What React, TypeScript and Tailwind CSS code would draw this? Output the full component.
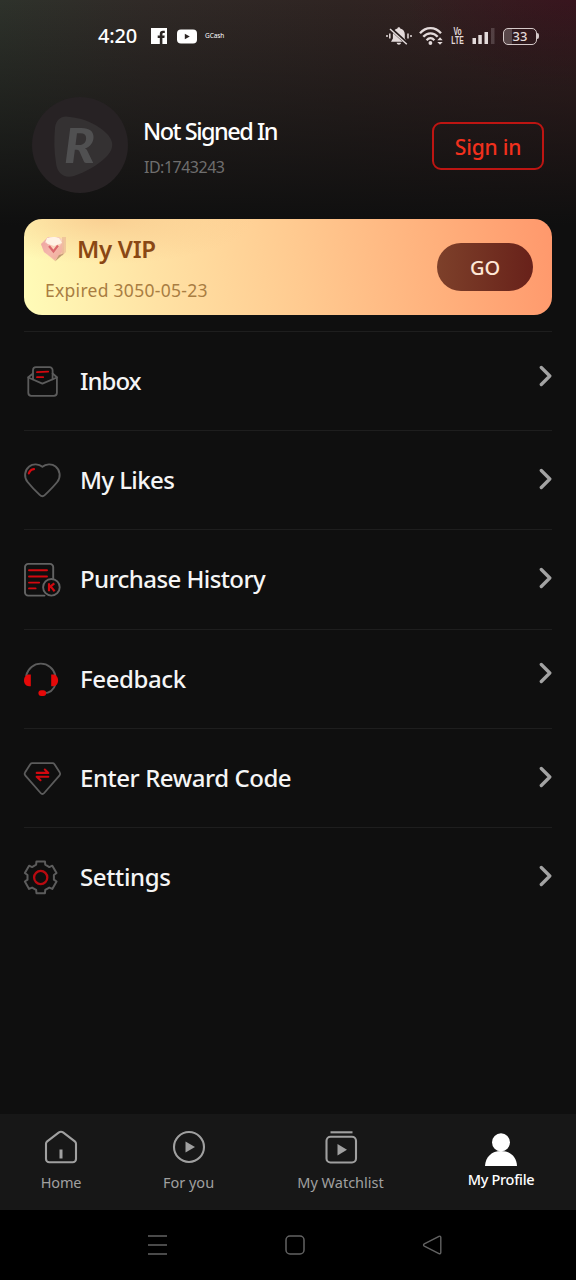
import React from 'react';

type IconProps = { className?: string };

const svgProps = {
  viewBox: '0 0 40 40',
  fill: 'none',
  strokeLinecap: 'round' as const,
  strokeLinejoin: 'round' as const,
  className: 'size-10 shrink-0',
};

const GREY = '#5c5c5c';
const RED = '#d3080f';

const InboxIcon = () => (
  <svg {...svgProps} stroke={GREY} strokeWidth={1.8}>
    <path d="M11 12.5 6.3 16.2v15.6a3 3 0 0 0 3 3h22.6a3 3 0 0 0 3-3V16.2L30.6 12.5" />
    <path d="M6.3 16.5 20.4 22.6 34.9 16.5" />
    <path d="M11 18.3V9.2a3 3 0 0 1 3-3h13.6a3 3 0 0 1 3 3v9.1" />
    <path d="M15 11.2 26.2 10.6M15 16.2h6.2" stroke={RED} strokeWidth={1.8} />
  </svg>
);

const HeartIcon = () => (
  <svg {...svgProps} stroke={GREY} strokeWidth={1.9}>
    <path d="M20.4 6.8C17 3.8 11 3.4 7.2 6.4c-4.8 3.9-5.5 10.6-1.6 15.6 3.6 4.5 7.8 8.8 12.1 12.9 1.700 1.600 3.600 1.600 5.300 0 4.300-4.100 8.600-8.400 12.200-12.900 3.900-5 3.100-11.700-1.600-15.600C29.800 3.400 23.800 3.800 20.400 6.800Z" />
    <path d="M6.800 13.400c.8-2.300 2.600-4 5.200-4.300" stroke={RED} strokeWidth={2.2} />
  </svg>
);

const PurchaseIcon = () => (
  <svg {...svgProps} stroke="#636363" strokeWidth={1.9}>
    <path d="M31.200 19.500V8.100a3.200 3.200 0 0 0-3.200-3.200H6.200A3.200 3.200 0 0 0 3 8.100v25.300a3.200 3.200 0 0 0 3.200 3.200h16.300" />
    <circle cx="29.400" cy="28.300" r="8.300" />
    <path d="M7 11.200h18M7 17.500h18M7 23.600h10.200M7 29.400h6.600" stroke={RED} />
    <path d="M27 24.300v8M32.300 24.300l-4.900 4.100M28.600 27.400l4 4.900" stroke={RED} strokeWidth={2.2} strokeLinecap="butt" />
  </svg>
);

const FeedbackIcon = () => (
  <svg {...svgProps} stroke={GREY} strokeWidth={1.8}>
    <path d="M4.200 16.500C6 9.400 11.800 4.700 18.800 4.700s12.900 4.700 14.600 11.800M33.600 25c-1.600 5.600-5 9-12.100 9.400" />
    <g fill="#e60909" stroke="none">
      <path d="M8.800 15.600v11.600H7c-3 0-5-2.300-5-5.700s2-5.900 5-5.900Z" />
      <path d="M29.200 15.600v11.600h2.300c2.400 0 4.600-2.300 4.600-5.700s-2.200-5.900-4.600-5.900Z" />
      <rect x="16.400" y="31.200" width="7.800" height="5.800" rx="2.900" />
    </g>
  </svg>
);

const RewardIcon = () => (
  <svg {...svgProps} stroke={GREY} strokeWidth={1.8}>
    <path d="M10.300 5.200h20.200c.9 0 1.500.3 2 1l5.300 8.400c.6.900.5 1.900-.2 2.700L22.200 35c-1.100 1.300-2.500 1.300-3.600 0L3.200 17.300c-.7-.8-.8-1.800-.2-2.700l5.300-8.400c.5-.7 1.100-1 2-1Z" />
    <path d="M14.700 14.900H26.300L22.800 11.500M26.300 18.700H14.700l3.800 3.500" stroke={RED} strokeWidth={2.1} />
  </svg>
);

// Six-toothed gear outline around (18.7, 20.3)
const gearPath = () => {
  const points: string[] = [];
  for (let i = 0; i < 6; i++) {
    [
      [-20, 13.4],
      [-15, 16.4],
      [15, 16.4],
      [20, 13.4],
    ].forEach(([offset, r]) => {
      const a = ((i * 60 - 90 + offset) * Math.PI) / 180;
      points.push(`${(18.7 + r * Math.cos(a)).toFixed(2)} ${(20.3 + r * Math.sin(a)).toFixed(2)}`);
    });
  }
  return `M${points.join('L')}Z`;
};

const SettingsIcon = () => (
  <svg {...svgProps} stroke={GREY} strokeWidth={2}>
    <path d={gearPath()} />
    <circle cx="18.700" cy="20.500" r="6.600" stroke="#b80a10" strokeWidth={2.3} />
  </svg>
);

const Chevron: React.FC<IconProps> = ({ className }) => (
  <svg viewBox="0 0 14 22" className={`h-[22px] w-3.5 ${className ?? ''}`} fill="none" stroke="#a3a3a3" strokeWidth={3.3} strokeLinecap="round" strokeLinejoin="round">
    <path d="M3.300 2.500 11.800 11 3.300 19.500" />
  </svg>
);

const menu = [
  { label: 'Inbox', icon: InboxIcon, chevron: 'mb-[11px]', text: 'tracking-[-1px]' },
  { label: 'My Likes', icon: HeartIcon, chevron: 'mb-[3px]', text: 'tracking-[-0.6px]' },
  { label: 'Purchase History', icon: PurchaseIcon, chevron: 'mb-[3px]', text: 'tracking-[-0.58px]' },
  { label: 'Feedback', icon: FeedbackIcon, chevron: 'mb-[12px]', text: 'tracking-[-0.4px]' },
  { label: 'Enter Reward Code', icon: RewardIcon, chevron: 'mb-[2px]', text: 'tracking-[-0.44px]' },
  { label: 'Settings', icon: SettingsIcon, chevron: 'mb-[2px]', text: 'tracking-[-0.35px]' },
];

const StatusBar = () => (
  <div className="flex h-18 items-center pr-[37px] pl-[98px] text-white">
    <span className="w-[53px] text-[20px] leading-none font-medium tracking-[-0.2px]">4:20</span>
    <svg viewBox="0 0 16 16" className="size-4">
      <path fill="#fff" d="M0 0h16v16h-4.600V9.900h2l.3-2.300h-2.300V6.200c0-.8.300-1.200 1.200-1.200h1.200V2.800h-1.900C9.900 2.800 8.800 4 8.800 5.900v1.700H6.700v2.300h2.100V16H0Z" />
    </svg>
    <svg viewBox="0 0 20 15" className="ml-2.5 h-[15px] w-5">
      <rect y="0.500" width="20" height="14" rx="4" fill="#fff" />
      <path d="M7.800 4.800v5.400l5-2.700Z" fill="#2a2321" />
    </svg>
    <span className="ml-2 text-[6.5px] leading-none tracking-[-0.1px]">GCash</span>

    <div className="ml-auto flex items-center text-[#e3dada]">
      <svg viewBox="0 0 26 20" className="h-5 w-[26px]" fill="currentColor">
        <path d="M12.800 1.200c.8 0 1.300.5 1.400 1.200 2.900.6 4.600 2.900 4.600 5.800v4.300l1.900 3.200H5l1.900-3.200V8.200c0-2.900 1.700-5.200 4.500-5.800.1-.7.600-1.200 1.400-1.200ZM10.600 16.800h4.500c-.3 1.200-1.100 1.900-2.200 1.900s-2-.7-2.300-1.900Z" />
        <path d="M4.800 2.800 21.500 18" stroke="#241b1a" strokeWidth="3.400" />
        <path d="M4 3 20.800 18.300" stroke="currentColor" strokeWidth="1.500" />
        <path d="M1 9v2M3.800 7.500v5M22 7.500v5M25 9v2" stroke="currentColor" strokeWidth="1.500" />
      </svg>
      <svg viewBox="0 0 25 20" className="ml-[7px] h-5 w-[25px]" fill="none" stroke="currentColor" strokeWidth="2.300">
        <path d="M1 7.200C7 .4 16 .4 22 7.200M4.300 10.800c4-4.700 10.400-4.700 14.400 0M7.600 14.200c2.400-2.700 5.400-2.700 7.800 0" />
        <circle cx="11.400" cy="17" r="1.900" fill="currentColor" stroke="none" />
        <path d="M18.300 14.200 21 11.300l2.700 2.900ZM18.300 15.900l2.700 2.900 2.700-2.900Z" fill="currentColor" stroke="none" />
      </svg>
      <div className="mr-[-2px] ml-[5px] flex w-[17px] scale-x-85 scale-y-125 flex-col items-center font-['Liberation_Sans',sans-serif] text-[8px] leading-[7px] font-bold">
        <span>Vo</span>
        <span>LTE</span>
      </div>
      <svg viewBox="0 0 23 18" className="ml-2 h-[18px] w-[23px]" fill="currentColor">
        <rect x="0.500" y="11" width="3.500" height="6" />
        <rect x="6.300" y="8" width="3.500" height="9" />
        <rect x="12.500" y="5" width="3.500" height="12" />
        <rect x="19" y="1" width="3.500" height="16" opacity="0.200" />
      </svg>
      <div className="ml-2 flex h-[17px] w-[34px] items-center justify-center rounded-[5px] border-[1.5px] border-[#d5c9c9] bg-linear-to-r from-white/20 from-25% to-transparent to-25% text-[13px] leading-none font-medium">
        33
      </div>
      <span className="h-1.5 w-[2px] rounded-r bg-[#d5c9c9]" />
    </div>
  </div>
);

const Profile = () => (
  <div className="flex items-center pt-[25px] pr-8 pl-8">
    <svg viewBox="0 0 96 96" className="size-24">
      <circle cx="48" cy="48" r="48" fill="#272224" />
      <path
        d="M23 31c1-9 7-13 15-11 10 1 20 4 30 11 14 10 16 19 6 29-8 8-20 15-32 19-10 3-17-3-18-13-2-12-2-24-1-35Z"
        fill="#343132"
      />
      <text x="32" y="66" fill="#505051" fontSize="47" fontWeight="900" fontStyle="italic" fontFamily="Lato, sans-serif" textLength="31" lengthAdjust="spacingAndGlyphs">
        R
      </text>
    </svg>
    <div className="ml-[15px] flex-1 pt-2">
      <div className="text-[23.5px] leading-8 font-medium tracking-[-1.5px] text-white">Not Signed In</div>
      <div className="mt-1 ml-px text-[16px] leading-8 tracking-[-0.5px] text-[#6f6e6e]">ID:1743243</div>
    </div>
    <button className="mt-[1px] h-12 w-28 rounded-[9px] border-2 border-[#bd1512] pt-[3px] text-[21px] leading-none font-medium tracking-[-0.2px] text-[#f2301d]">
      Sign in
    </button>
  </div>
);

const VipBadge = () => (
  <svg viewBox="0 0 28 28" className="size-7">
    <defs>
      <linearGradient id="gem" x1="0" y1="0" x2="1" y2="1">
        <stop offset="0" stopColor="#e99a9d" />
        <stop offset="0.500" stopColor="#fbd5bd" />
        <stop offset="1" stopColor="#f0bd8c" />
      </linearGradient>
    </defs>
    <path d="M8 2h11l5 3v13l-9 8L4 17 1 9Z" fill="url(#gem)" />
    <path d="M22 2h4v15l-4 4Z" fill="#e8b294" opacity="0.600" />
    <path d="M7 3c4-1.500 9-1.500 12 0l3 5-8 3-9-3Z" fill="#fff3e6" />
    <path d="m1 9 5-2 8 11 8-10v9l-7 8L4 17Z" fill="#f0a3a0" opacity="0.600" />
    <path d="M9 11l4.500 5.500L18 10.500" fill="none" stroke="#d9666c" strokeWidth="2.200" />
    <path d="m15 26.500 9-8-5 1.500Z" fill="#b08a66" opacity="0.800" />
  </svg>
);

const VipCard = () => (
  <div className="mx-6 mt-[26px] flex h-24 items-center justify-between rounded-[18px] bg-[radial-gradient(ellipse_150px_45px_at_80px_0px,#f8c78bbb,transparent),linear-gradient(82deg,#fffcb8_0%,#ffe2a4_25%,#ffca90_52%,#ffb07c_78%,#ff986c_100%)] pr-[19px] pl-4">
    <div>
      <div className="flex items-center">
        <VipBadge />
        <span className="ml-[9px] text-[24px] leading-8 font-semibold tracking-[-0.3px] text-[#8a4714]">My VIP</span>
      </div>
      <div className="mt-[13px] ml-[5px] text-[17.5px] leading-6 tracking-[0.28px] text-[#a97d42]">Expired 3050-05-23</div>
    </div>
    <button className="h-12 w-24 rounded-full bg-linear-to-r from-[#7d402a] to-[#68211a] pt-[2px] text-[20px] font-medium text-[#ffe8d6]">GO</button>
  </div>
);

const BottomNav = () => (
  <nav className="flex h-24 bg-[#171717] pt-4 text-[14.5px] leading-5 text-[#a0a0a0]">
    <div className="flex w-[122px] flex-col items-center">
      <svg viewBox="0 0 34 34" className="size-[34px]" fill="none" stroke="currentColor" strokeWidth="2.100" strokeLinejoin="round">
        <path d="M14.600 2.600 3.200 11.300C2.300 12 2 12.700 2 13.700V29a3.300 3.300 0 0 0 3.300 3.300h23.400A3.300 3.300 0 0 0 32 29V13.700c0-1-.3-1.700-1.200-2.400L19.400 2.600c-1.600-1.200-3.200-1.200-4.800 0Z" />
        <path d="M17 19.500v9" strokeWidth="3" />
      </svg>
      <span className="mt-2 tracking-[-0.2px]">Home</span>
    </div>
    <div className="flex w-[133px] flex-col items-center">
      <svg viewBox="0 0 34 34" className="size-[34px]" fill="none" stroke="currentColor" strokeWidth="2.100">
        <circle cx="17" cy="17" r="15" />
        <path d="M13.500 11.500v11l9.500-5.500Z" fill="currentColor" stroke="none" />
      </svg>
      <span className="mt-2">For you</span>
    </div>
    <div className="flex w-[171px] flex-col items-center">
      <svg viewBox="0 0 34 34" className="size-[34px]" fill="none" stroke="currentColor" strokeWidth="2.100">
        <path d="M6.500 2.300h22" />
        <rect x="2.500" y="6.700" width="29.500" height="25.800" rx="4" />
        <path d="M13.500 14v11.500l9.500-5.700Z" fill="currentColor" stroke="none" />
      </svg>
      <span className="mt-2">My Watchlist</span>
    </div>
    <div className="flex w-[150px] flex-col items-center text-white">
      <svg viewBox="0 0 34 34" className="mt-[3px] size-[34px]" fill="currentColor">
        <circle cx="17" cy="9.300" r="9" />
        <path d="M1 33c.5-9 6.500-15 16-15s15.500 6 16 15Z" />
      </svg>
      <span className="mt-[2px] font-medium tracking-[-0.3px]">My Profile</span>
    </div>
  </nav>
);

const SystemBar = () => (
  <div className="flex h-[70px] items-center bg-black pl-[147px] text-[#636363]">
    <svg viewBox="0 0 22 22" className="size-[22px]" stroke="currentColor" strokeWidth="1.500">
      <path d="M1 2h19M1 11h19M1 20h19" />
    </svg>
    <svg viewBox="0 0 22 22" className="ml-[115px] size-[22px]" fill="none" stroke="currentColor" strokeWidth="1.500">
      <rect x="2" y="2" width="18" height="18" rx="4" />
    </svg>
    <svg viewBox="0 0 22 22" className="ml-[115px] size-[22px]" fill="none" stroke="currentColor" strokeWidth="1.400" strokeLinejoin="round">
      <path d="M18 2.300 3.300 9.800c-1 .6-1 1.700 0 2.300L18 19.600c1 .4 1.800 0 1.800-1V3.300c0-1-.8-1.400-1.800-1Z" />
    </svg>
  </div>
);

const App: React.FC = () => {
  return (
    <main className="flex h-[1280px] w-full flex-col overflow-hidden bg-[#0f0f0f] bg-[linear-gradient(to_bottom,transparent_0px,#0f0f0f_225px),radial-gradient(ellipse_170px_90px_at_100%_0%,#38151e,transparent),linear-gradient(to_right,#2e322b_0%,#302a27_25%,#2f2422_60%,#361f20_100%)] font-['Noto_Sans',sans-serif]">
      <StatusBar />
      <Profile />
      <VipCard />
      <ul className="mx-6 mt-4">
        {menu.map(({ label, icon: Icon, chevron, text }) => (
          <li key={label} className="flex h-[99.2px] items-center border-t-[1.5px] border-[#1e1e1e]">
            <div className="-ml-0.5 flex items-center">
              <Icon />
            </div>
            <span className={`ml-[18px] flex-1 text-[24px] leading-8 font-medium text-[#f5f5f5] ${text}`}>{label}</span>
            <Chevron className={chevron} />
          </li>
        ))}
      </ul>
      <div className="mt-auto">
        <BottomNav />
        <SystemBar />
      </div>
    </main>
  );
};

export default App;
